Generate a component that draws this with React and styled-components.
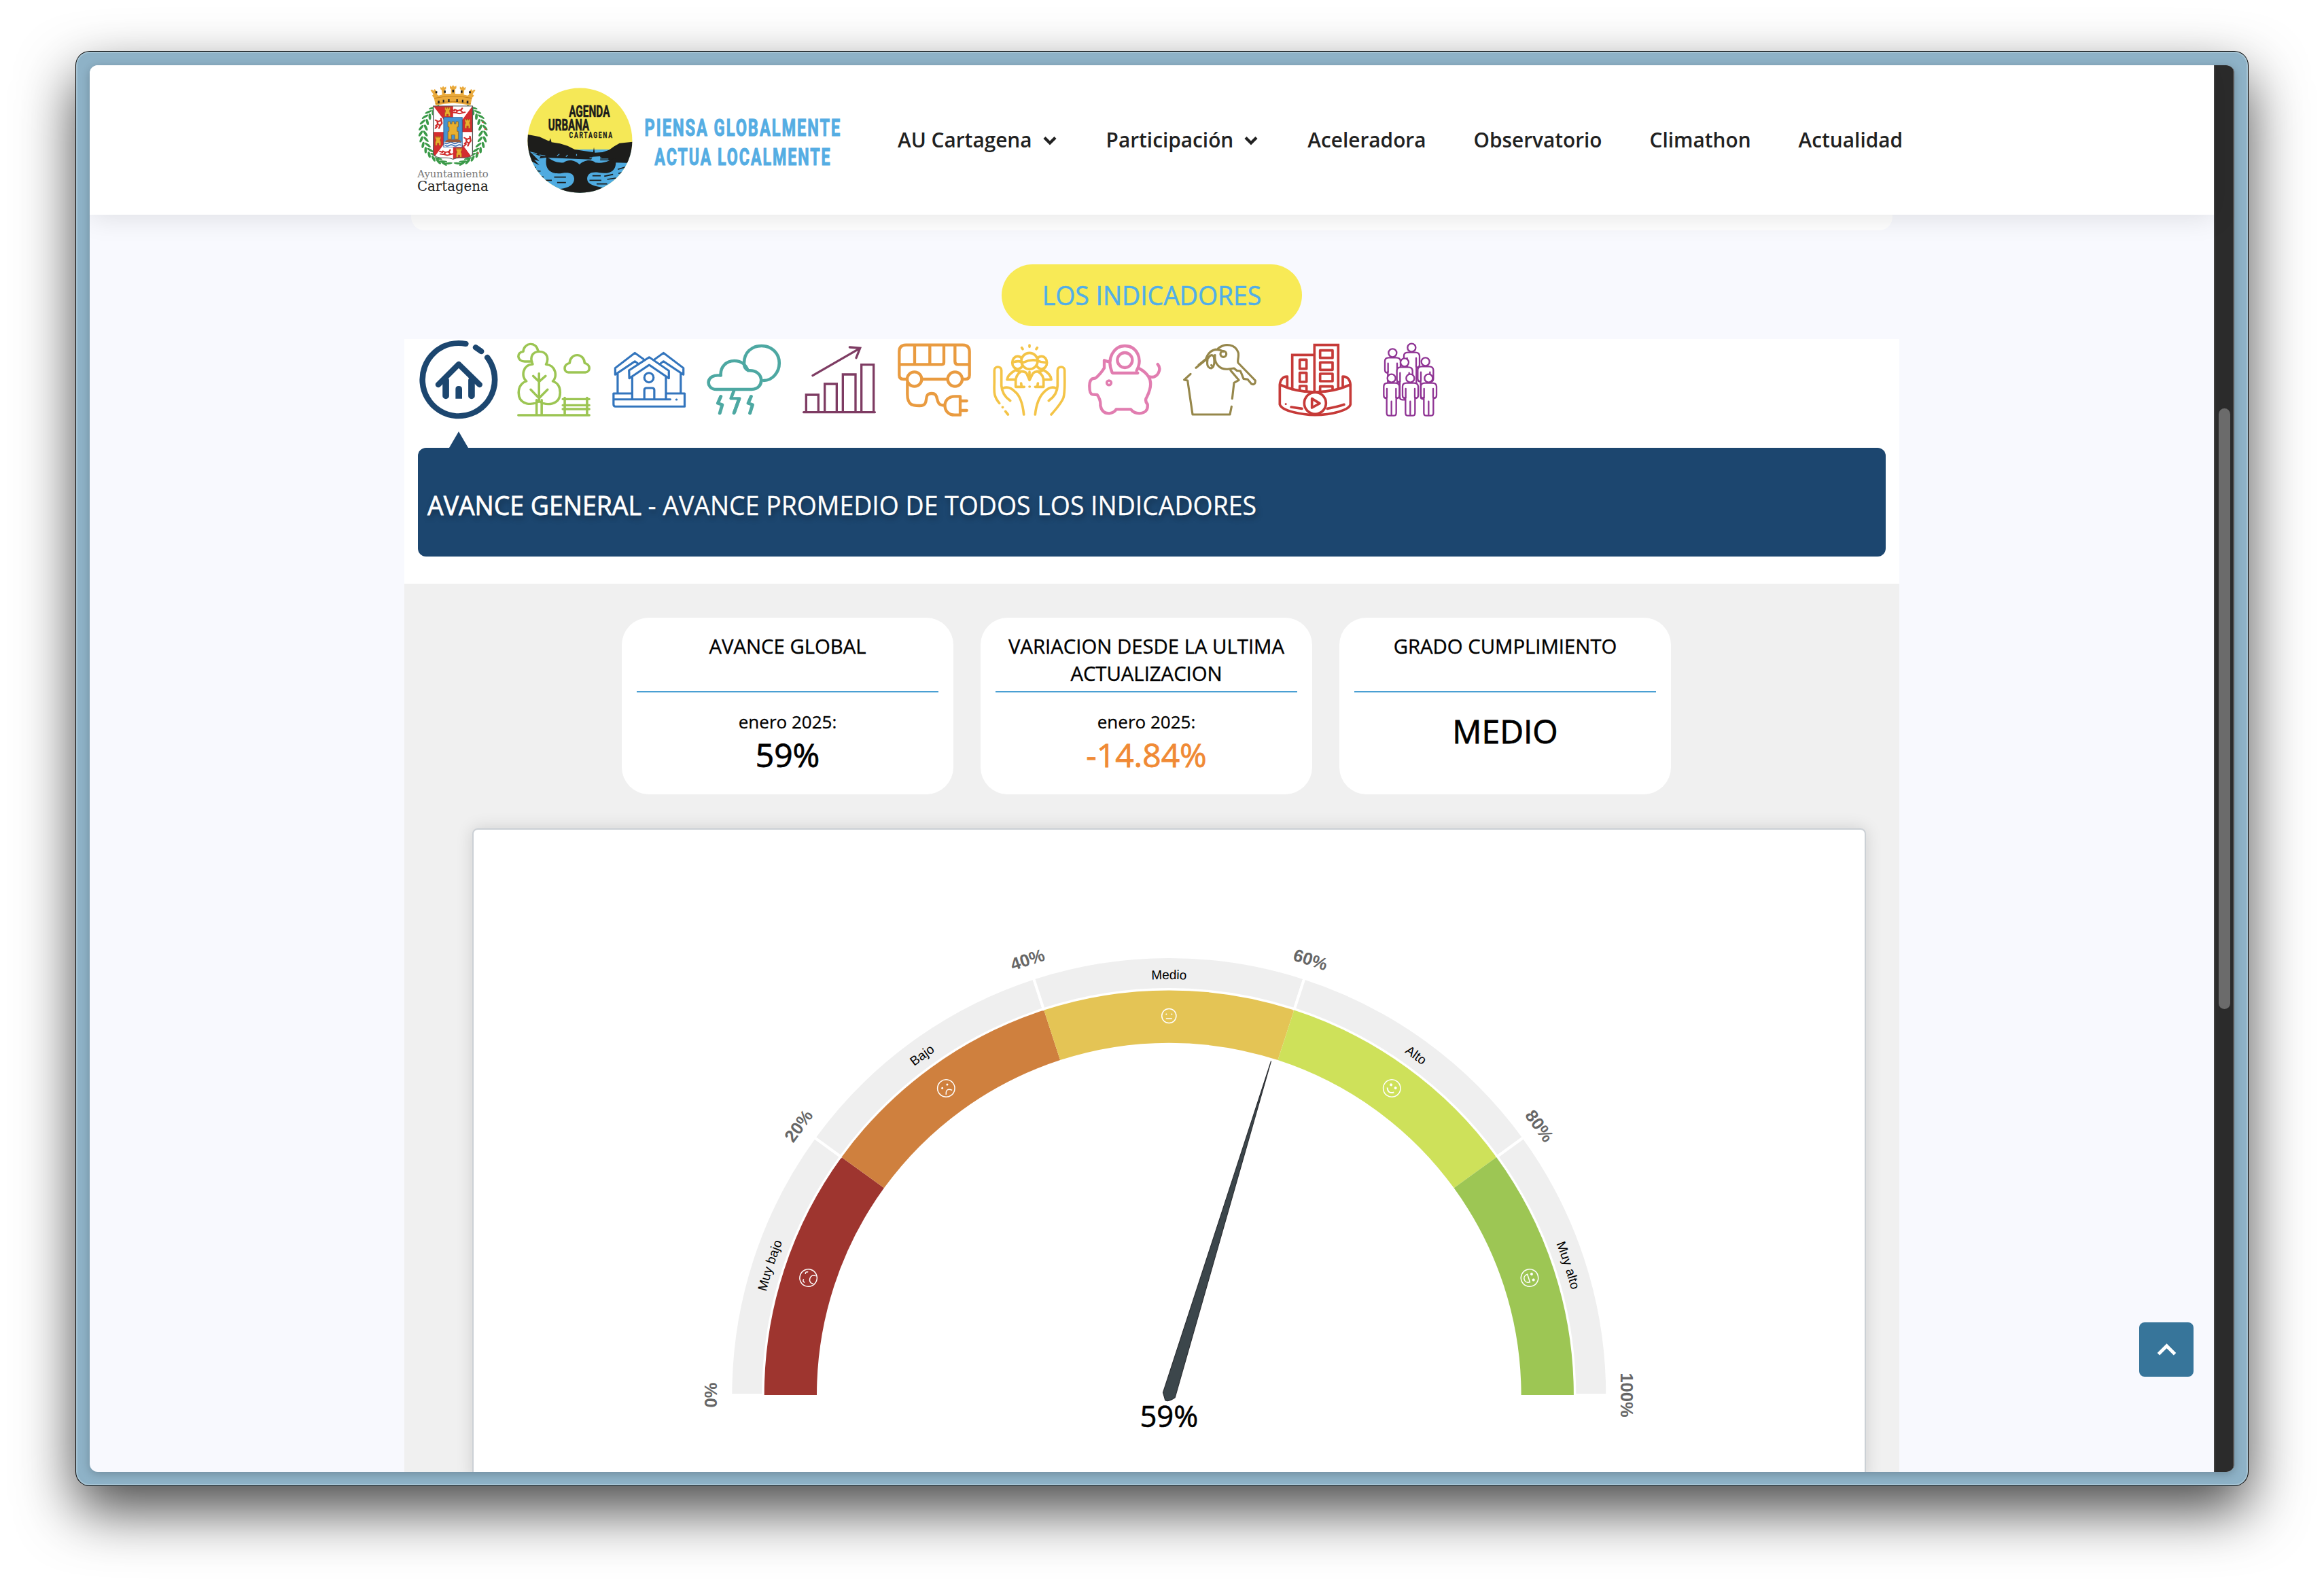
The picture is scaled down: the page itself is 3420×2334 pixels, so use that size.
import React from "react";
import styled, { createGlobalStyle } from "styled-components";

const SANS = '"Open Sans", "Noto Sans", sans-serif';
const HELV = '"Liberation Sans", Arial, sans-serif';

const GlobalStyle = createGlobalStyle`
  * { box-sizing: border-box; }
  body { margin: 0; background: #fff; overflow: hidden; font-family: ${SANS}; color: #000; }
`;

const Desktop = styled.div`
  width: 3420px;
  height: 2334px;
  padding: 76px 112px 148px;
  background: #fff;
  overflow: hidden;
`;

const WindowFrame = styled.div`
  width: 3196px;
  height: 2110px;
  padding: 18px;
  border: 2px solid #a6c4d4;
  border-radius: 20px;
  background: #8eb2c7;
  box-shadow: 0 0 0 1px #000, 0 36px 84px rgba(0, 0, 0, 0.72);
`;

const Viewport = styled.div`
  position: relative;
  display: flex;
  width: 3156px;
  height: 2070px;
  border-radius: 12px;
  background: #f8f9fe;
  overflow: hidden;
`;

const ViewportShadow = styled.div`
  border-radius: 12px;
  box-shadow: 0 3px 14px rgba(0, 0, 0, 0.22);
`;

const Page = styled.div`
  display: flex;
  flex-direction: column;
  width: 3126px;
  height: 2070px;
`;

const ScrollTrack = styled.div`
  width: 30px;
  padding: 505px 4px 0 5px;
  border-left: 2px solid #404040;
  border-right: 2px solid #555;
  background: #2b2b2b;
`;

const ScrollThumb = styled.div`
  width: 17px;
  height: 884px;
  border-radius: 9px;
  background: #6b6b6b;
`;

const Header = styled.header`
  position: relative;
  z-index: 1;
  display: flex;
  flex: none;
  height: 220px;
  padding: 24px 0 0 478px;
  background: #fff;
  box-shadow: 0 4px 38px rgba(0, 0, 0, 0.11);
`;

const Crest = styled.svg`
  flex: none;
  width: 114px;
  height: 170px;
  overflow: visible;
`;

const Brand = styled.svg`
  flex: none;
  width: 468px;
  height: 170px;
  margin-left: 48px;
  overflow: visible;
`;

const Nav = styled.nav`
  display: flex;
  align-items: center;
  gap: 70px;
  height: 172px;
  margin: 0 0 0 81px;
`;

const NavLink = styled.a`
  display: flex;
  align-items: center;
  gap: 16px;
  font-size: 29.8px;
  font-weight: 600;
  line-height: 40px;
  color: #212121;
  white-space: nowrap;
  svg { width: 20px; height: 14px; margin: 1px 3px 0 0; }
`;

const Main = styled.main`
  display: flex;
  flex-direction: column;
  align-items: center;
  flex: 1;
  overflow: hidden;
`;

const PreviousCard = styled.div`
  flex: none;
  width: 2180px;
  height: 23px;
  border-radius: 0 0 20px 20px;
  background: #fff;
`;

const SectionPill = styled.h2`
  display: flex;
  align-items: center;
  justify-content: center;
  flex: none;
  width: 442px;
  height: 91px;
  margin: 50px 0 19px;
  border-radius: 46px;
  background: #f8ea56;
  color: #50aee8;
  font-size: 37.4px;
  font-weight: 400;
  white-space: nowrap;
  -webkit-text-stroke: 0.5px currentColor;
`;

const Tabs = styled.div`
  flex: none;
  width: 2200px;
  height: 360px;
  padding: 0 20px;
  background: #fff;
`;

const TabRow = styled.div`
  display: flex;
  gap: 20px;
  height: 136px;
`;

const TabIcon = styled.svg`
  width: 120px;
  height: 120px;
  fill: none;
  stroke: ${(p) => p.$tone};
  stroke-width: ${(p) => p.$weight || 10};
  stroke-linecap: round;
  stroke-linejoin: round;
`;

const Pointer = styled.div`
  width: 28px;
  height: 24px;
  margin-left: 46px;
  background: #1c466f;
  clip-path: polygon(50% 0, 100% 100%, 0 100%);
`;

const Banner = styled.div`
  display: flex;
  align-items: center;
  height: 160px;
  padding: 10px 14px 0;
  border-radius: 12px;
  background: #1c466f;
  color: #fff;
  font-size: 37.4px;
  line-height: 52px;
  white-space: pre;
  text-shadow: 2px 4px 8px rgba(0, 0, 0, 0.4);
  -webkit-text-stroke: 0.3px currentColor;
`;

const BannerLead = styled.span`
  font-weight: 500;
  -webkit-text-stroke: 0.8px currentColor;
`;

const Panel = styled.section`
  display: flex;
  flex-direction: column;
  flex: none;
  width: 2200px;
  height: 1320px;
  padding-top: 50px;
  background: #f0f0f0;
`;

const Cards = styled.div`
  display: flex;
  gap: 40px;
  padding-left: 320px;
`;

const Card = styled.div`
  display: flex;
  flex-direction: column;
  align-items: center;
  width: 488px;
  height: 260px;
  padding: 22px;
  border-radius: 40px;
  background: #fff;
  text-align: center;
`;

const CardTitle = styled.div`
  width: 444px;
  height: 88px;
  border-bottom: 2px solid #4a9fd3;
  font-size: 29.3px;
  line-height: 40px;
  -webkit-text-stroke: 0.4px currentColor;
`;

const CardDate = styled.div`
  margin-top: 25px;
  font-size: 26px;
  line-height: 36px;
  -webkit-text-stroke: 0.3px currentColor;
`;

const CardValue = styled.div`
  margin-top: ${(p) => (p.$alone ? 24 : -2)}px;
  font-size: 48px;
  font-weight: 500;
  line-height: 66px;
  color: ${(p) => p.$tone || "#000"};
  -webkit-text-stroke: 0.8px currentColor;
`;

const ChartCard = styled.div`
  width: 2051px;
  height: 1100px;
  margin: 50px 0 0 100px;
  border: 2px solid #cbd0d5;
  border-radius: 8px;
  background: #fff;
  box-shadow: 0 0 24px rgba(0, 0, 0, 0.14);
`;

const Gauge = styled.svg`
  display: block;
  width: 2045px;
  height: 940px;
`;

const TopButton = styled.button`
  position: absolute;
  right: 60px;
  bottom: 140px;
  display: flex;
  align-items: center;
  justify-content: center;
  width: 80px;
  height: 80px;
  padding: 0;
  border: 0;
  border-radius: 8px;
  background: #37759a;
  svg { width: 29px; height: 20px; margin-top: 1px; }
`;

const leaf = (cx, cy, a, k) => (
  <ellipse key={k} cx={cx} cy={cy} rx="14" ry="4.5" transform={`rotate(${a} ${cx} ${cy})`} />
);

function Laurel({ side }) {
  const out = [];
  for (let i = 0; i < 13; i++) {
    const deg = 53 - i * 10.8;
    const r = (deg * Math.PI) / 180;
    const x = 177 + side * 102 * Math.cos(r);
    const y = 290 - 138 * Math.sin(r);
    const tangent = (Math.atan2(-138 * Math.cos(r), -102 * side * Math.sin(r)) * 180) / Math.PI;
    out.push(leaf(x - 8, y - 3, tangent + 26, `a${i}`));
    out.push(leaf(x + 8, y - 3, tangent - 26, `b${i}`));
  }
  return <g fill="#3b9a49">{out}</g>;
}

const Castle = ({ x, y, s = 1 }) => (
  <path
    fill="#e9b02f"
    stroke="#8a5a14"
    strokeWidth="1"
    transform={`translate(${x} ${y}) scale(${s})`}
    d="M-9 20 V2 H-7 V-8 H-9 V-20 H-5 V-15 H-2 V-20 H2 V-15 H5 V-20 H9 V-8 H7 V2 H9 V20 H3 V10 H-3 V20Z"
  />
);

const Lion = ({ x, y, r = 0 }) => (
  <path
    fill="none"
    stroke="#cf2b2b"
    strokeWidth="5.5"
    strokeLinecap="round"
    transform={`translate(${x} ${y}) rotate(${r})`}
    d="M-10 -14 L-4 -10 L-2 4 L6 10 L2 22 M-2 4 L-9 12 M-3 -6 L8 -12 M6 10 L12 0 L9 -20 M-4 14 L-10 22"
  />
);

function CityCrest() {
  return (
    <Crest viewBox="46 60 263 510" preserveAspectRatio="none">
      <path
        fill="#eaaa3c"
        d="M118 166 L112 133 L106 122 L110 116 L100 98 L106 95 L110 101 L114 93 L119 99 L123 118 L128 122 L140 118 L138 97 L134 94 L134 83 L139 88 L143 80 L148 87 L153 82 L153 93 L149 97 L151 115 L170 114 L170 94 L166 90 L166 78 L172 83 L177 76 L182 83 L188 78 L188 90 L184 94 L184 114 L202 115 L204 97 L200 93 L200 82 L206 87 L210 80 L215 88 L220 83 L219 95 L215 97 L213 118 L226 122 L231 118 L234 99 L239 93 L243 101 L248 95 L253 98 L243 116 L248 122 L241 133 L236 166 Q177 144 118 166Z"
      />
      <path fill="none" stroke="#b97512" strokeWidth="2" d="M113 134 Q177 116 241 134 M117 158 Q177 138 237 158" />
      <path fill="#222" d="M117 103h6v9h-6zM146 100h6v10h-6zM174 96h6v12h-6zM203 100h6v10h-6zM231 103h6v9h-6zM125 145h6v12h-6zM142 140h5v12h-5zM160 138h5v12h-5zM188 138h5v12h-5zM207 140h5v12h-5zM223 145h6v12h-6z" />
      <Laurel side={-1} />
      <Laurel side={1} />
      <g fill="#d33"><circle cx="278" cy="240" r="3" /><circle cx="286" cy="270" r="3" /><circle cx="262" cy="376" r="3" /></g>
      <clipPath id="shield"><path d="M110 168 H243 V378 Q242 397 205 397 Q188 396 177 403 Q166 396 149 397 Q112 397 110 378Z" /></clipPath>
      <g clipPath="url(#shield)">
        <rect x="105" y="160" width="145" height="250" fill="#fff" />
        <path fill="#d32d2f" d="M110 168 L177 168 V283 Z M243 168 V283 H177Z M110 283 H177 L110 398Z M177 283 L243 398 L177 405Z" />
        <Castle x={158} y={194} />
        <Castle x={226} y={246} />
        <Castle x={126} y={322} />
        <Castle x={197} y={374} />
        <Lion x={196} y={190} r={80} />
        <Lion x={127} y={244} />
        <Lion x={225} y={322} />
        <Lion x={155} y={374} r={80} />
      </g>
      <path fill="none" stroke="#555" strokeWidth="3" d="M110 168 H243 V378 Q242 397 205 397 Q188 396 177 403 Q166 396 149 397 Q112 397 110 378Z" />
      <rect x="145" y="218" width="63" height="132" fill="#4593d3" stroke="#2c5a8a" strokeWidth="2" />
      <path fill="#f4f7fb" d="M147 326h59v23h-59z" />
      <path fill="none" stroke="#2e67b1" strokeWidth="4" d="M148 331 q7 7 14 0 t14 0 t14 0 t14 0 M150 342 q7 6 14 0 t14 0 t14 0 t12 0" />
      <Castle x={177} y={276} s={1.95} />
      <path fill="#9a5a3a" d="M150 328 Q152 316 165 316 H190 Q203 316 205 328Z" />
      <g fontFamily='"DejaVu Serif Condensed", "DejaVu Serif", serif'>
        <text x="56" y="484" fontSize="44" fill="#777" textLength="241" lengthAdjust="spacingAndGlyphs">Ayuntamiento</text>
        <text x="55" y="544" fontSize="63" fill="#222" textLength="242" lengthAdjust="spacingAndGlyphs">Cartagena</text>
      </g>
    </Crest>
  );
}

function AgendaLogo() {
  return (
    <Brand viewBox="419.7 60 1079.2 510" preserveAspectRatio="none">
      <clipPath id="disc"><ellipse cx="607.5" cy="320" rx="177.5" ry="231.5" /></clipPath>
      <g clipPath="url(#disc)">
        <rect x="420" y="80" width="380" height="480" fill="#f5e857" />
        <rect x="420" y="360" width="380" height="200" fill="#4fabe0" />
        <path
          fill="#1d1d1b"
          d="M420 292 L440 296 L470 304 L500 322 L504 322 L507 310 L511 328 L540 334 L566 344 L590 360 L620 366 L652 372 L655 350 L658 374 L684 372 L706 362 L724 346 L742 332 L790 326 V420 L728 418 L724 408 H676 V390 L650 392 L646 404 L490 396 L470 400 L474 390 L450 378 L436 366 L470 412 L452 404 L470 430 L446 414 L420 420Z"
        />
        <path fill="none" stroke="#4fabe0" strokeWidth="3" d="M440 372 l22 6 M470 384 l20 4 M530 388 l8 -8 M560 392 l6 -8 M596 388 v-8 M640 396 h40 M674 402 h30" />
        <path
          fill="#1d1d1b"
          d="M494 394 C510 402 520 420 552 418 C570 400 592 408 606 426 C620 408 644 400 660 418 C694 424 712 404 728 396 C736 452 712 472 672 462 C648 458 634 464 632 488 C632 508 645 515 662 522 L712 536 L700 556 H500 L530 536 C575 530 588 512 588 488 C586 464 570 460 548 464 C508 472 486 448 494 394Z"
        />
        <path fill="none" stroke="#1d1d1b" strokeWidth="5" d="M434 430 l24 10 M440 440 l20 12 M444 452 l30 4 M452 468 l12 10 M462 476 l22 6 M482 496 h30 M520 482 h40 M650 476 h28 M690 478 l30 -8 M640 496 h40 M664 512 h36 M700 492 l30 -6 M736 448 l40 -16 M738 466 l24 -8 M530 506 h30 M700 524 h24" />
      </g>
      <g fontFamily="Roboto, sans-serif" fontWeight="700" fill="#1d1d1b" stroke="#1d1d1b" strokeWidth="2">
        <text x="570" y="215" fontSize="73" textLength="139" lengthAdjust="spacingAndGlyphs">AGENDA</text>
        <text x="500" y="276" fontSize="73" textLength="139" lengthAdjust="spacingAndGlyphs">URBANA</text>
        <text x="571" y="308" fontSize="36" letterSpacing="7" textLength="150" lengthAdjust="spacingAndGlyphs" strokeWidth="1">CARTAGENA</text>
      </g>
      <g fontFamily="Roboto, sans-serif" fontWeight="700" fill="#55ade3" stroke="#55ade3" strokeWidth="3.5">
        <text x="827" y="299" fontSize="106" letterSpacing="9" textLength="668" lengthAdjust="spacingAndGlyphs">PIENSA GLOBALMENTE</text>
        <text x="861" y="430" fontSize="106" letterSpacing="9" textLength="600" lengthAdjust="spacingAndGlyphs">ACTUA LOCALMENTE</text>
      </g>
    </Brand>
  );
}

const Chevron = () => (
  <svg viewBox="0 0 20 14" fill="none" stroke="#212121" strokeWidth="4.4">
    <path d="M2 2.5 L10 10.5 L18 2.5" />
  </svg>
);

const PEOPLE = [
  [1312, 95], [1228, 118], [1281, 160], [1373, 157], [1223, 230], [1306, 230], [1387, 230],
];

const Person = ({ x, y }) => (
  <g transform={`translate(${x} ${y})`} fill="#fff">
    <path d="M-16 21 Q-34 21 -34 36 V75 Q-34 86 -26 88 L-21 84 V153 Q-21 165 -10 165 H10 Q21 165 21 153 V84 L26 88 Q35 86 35 75 V36 Q34 21 16 21Z" />
    <path d="M-20 46 V84 M20 46 V84 M0 102 V160" />
    <circle r="18" />
  </g>
);

const TABS = [
  {
    tone: "#1c466f", box: "70 57 336 360", weight: 24,
    art: (
      <>
        <path d="M356 138 A149 161 0 1 1 267 78 M308 94 L331 111" />
        <path d="M154 258 L238 168 L324 258" />
        <path strokeWidth="27" d="M185 238 V308 M291 238 V308" />
        <path stroke="none" fill="#1c466f" d="M225 320 V278 Q225 264 238 264 Q252 264 252 278 V320Z" />
      </>
    ),
  },
  {
    tone: "#9cc553", box: "462 57 336 360",
    art: (
      <path d="M540 156 H510 C478 156 475 115 504 112 C506 72 558 66 565 108 M569 332 C545 350 485 352 485 293 C485 265 500 248 517 243 C495 225 500 170 543 168 C530 140 540 112 570 112 C600 112 612 140 598 169 C640 172 645 225 626 243 C645 250 656 268 656 293 C656 350 600 352 569 332Z M569 209 V332 M545 220 L569 245 L596 220 M535 280 L569 318 L604 280 M559 326 V390 M580 326 V390 M484 393 H776 M667 322 H776 M667 349 H776 M667 366 H776 M675 316 V390 M767 316 V390 M690 204 H760 C782 202 782 168 757 163 C754 116 698 116 695 163 C668 168 670 204 690 204Z" />
    ),
  },
  {
    tone: "#3375bd", box: "854 57 336 360", weight: 9,
    art: (
      <>
        <path d="M1000 146 L964 118 L883 185 V214 L964 155 L978 166 M1046 146 L1082 118 L1164 185 V214 L1082 155 L1068 166 M893 208 V296 M1153 208 V296 M940 195 L1023 137 L1104 197 V230 L1023 171 L941 230Z M953 224 V323 M1092 224 V323 M948 297 H876 V323 M1097 297 H1169 V355 H884 Q876 355 876 345 V323 H1110 M1003 322 V282 Q1003 273 1012 273 H1035 Q1044 273 1044 282 V322 M1135 324 h1" />
        <ellipse cx="1022" cy="227" rx="19" ry="21" />
      </>
    ),
  },
  {
    tone: "#4da8a2", box: "1246 57 336 360", weight: 13,
    art: (
      <>
        <path d="M1430 195 C1418 190 1414 180 1414 163 C1414 115 1445 87 1486 87 C1530 87 1559 122 1559 163 C1559 205 1530 240 1495 240 M1318 218 C1255 208 1253 279 1300 279 H1445 C1500 279 1500 190 1430 196 C1420 170 1405 153 1374 153 C1340 153 1315 180 1318 218Z M1372 285 L1360 319 L1395 319 L1372 384" />
        <path strokeWidth="14" d="M1318 310 L1306 340 L1324 347 L1314 384 M1443 310 L1431 340 L1449 347 L1438 384 M1393 322 L1374 380" />
      </>
    ),
  },
  {
    tone: "#7e3c63", box: "105 57 360 360",
    art: (
      <path strokeLinejoin="miter" d="M128 380 H442 M139 378 V303 H193 V378 M221 378 V255 H274 V378 M301 378 V213 H357 V378 M383 378 V170 H437 V378 M168 218 L376 98 M331 93 L377 97 L360 140" />
    ),
  },
  {
    tone: "#e99b40", box: "525 57 360 360", weight: 13,
    art: (
      <>
        <path d="M582 234 H568 Q550 234 550 216 V112 Q550 83 580 83 H830 Q860 83 860 112 V216 Q860 234 843 234 H832 M652 234 H763 M556 169 H738 Q747 169 747 160 V90 M618 88 V165 M685 88 V165 M796 90 V155 Q796 169 810 169 H855 M586 250 V300 C586 352 612 351 640 351 C690 351 650 297 693 297 C733 297 700 350 750 350 M819 310 H795 C737 310 737 392 795 392 H819Z M825 330 H848 M825 372 H848" />
        <circle cx="617" cy="234" r="32" />
        <circle cx="796" cy="234" r="32" />
      </>
    ),
  },
  {
    tone: "#f4c447", box: "945 57 360 360", weight: 11,
    art: (
      <>
        <ellipse cx="1073" cy="161" rx="24" ry="28" />
        <ellipse cx="1178" cy="161" rx="24" ry="28" />
        <circle cx="1125" cy="154" r="36" fill="#fff" />
        <path d="M1050 160 Q1075 150 1098 160 Q1130 145 1160 152 Q1180 162 1200 160 M1063 194 Q1028 215 1026 236 H1060 M1188 194 Q1222 215 1221 236 H1190 M1064 194 L1085 202 Q1066 215 1064 240 V268 H1102 M1187 194 L1165 202 Q1186 215 1187 240 V268 H1150 M1086 200 Q1105 198 1112 208 L1125 238 L1140 208 Q1150 198 1166 200 M1125 202 V230 M1088 252 L1090 266 M1162 252 L1160 266 M1125 267 h1 M1125 84 V91 M1091 95 l4 6 M1159 95 l-4 6" />
        <path d="M992 340 C966 310 969 290 970 250 V195 C970 175 1000 175 1001 195 V262 C1003 295 1020 315 1040 329 M1008 274 Q1035 262 1062 290 Q1092 315 1100 390 M1006 358 h1 M1019 376 L1030 390 M1221 390 Q1266 340 1275 315 C1283 290 1280 250 1280 195 C1280 175 1250 175 1249 195 V262 C1248 295 1230 315 1210 329 M1242 274 Q1218 262 1190 290 Q1158 320 1150 390" />
      </>
    ),
  },
  {
    tone: "#e17db0", box: "-135 57 360 360", weight: 13,
    art: (
      <>
        <path d="M-20 159 L-45 151 V185 Q-62 212 -83 229 L-98 232 Q-111 240 -110 266 Q-110 298 -98 301 L-76 303 Q-60 325 -62 350 Q-55 387 -22 385 Q0 382 8 367 H72 Q85 385 110 385 Q150 383 146 345 Q132 328 143 313 Q172 255 150 222 Q135 200 108 186 M-8 207 H103 M-10 205 C-38 140 0 87 46 87 C100 87 126 145 98 196 M150 222 Q180 232 194 207 Q206 185 191 168" />
        <circle cx="46" cy="150" r="33" />
        <circle cx="-24" cy="250" r="10" strokeWidth="11" />
      </>
    ),
  },
  {
    tone: "#96874b", box: "285 57 360 360", weight: 9.5,
    art: (
      <>
        <path d="M360 184 L402 150 Q415 106 450 103 M372 171 L410 140 M458 98 C490 72 535 80 547 118 C550 140 542 150 546 162 L622 240 Q623 262 605 255 L588 235 L570 232 L562 212 L556 198 L540 196 L528 186 L505 189 C465 195 440 165 444 128 M444 103 Q470 104 480 112 M411 148 Q405 184 427 186 Q446 180 439 135 Q428 118 413 142 M428 172 l1 2 M336 211 L308 237 L323 240 L345 390 H510 L517 355 M520 320 L528 250 L549 238 L513 196" />
        <circle cx="481" cy="123" r="13" />
      </>
    ),
  },
  {
    tone: "#c63a38", box: "705 57 360 360", weight: 11,
    art: (
      <>
        <path strokeLinejoin="miter" d="M785 278 V127 H883 V288 M883 127 V83 H988 V276" />
        <path d="M818 148 h30 v40 h-30Z M818 206 h30 v40 h-30Z M818 280 V264 h30 v18 M908 107 h55 v33 h-55Z M908 160 h55 v33 h-55Z M908 210 h55 v33 h-55Z M908 284 V266 h55 v14" />
        <path d="M763 268 V222 Q735 222 730 258 V345 C738 375 830 392 885 392 C960 392 1038 370 1042 345 V258 Q1038 222 1008 222 V268 M730 258 Q800 291 885 291 Q970 291 1042 258 M780 357 L828 364 M940 364 Q990 355 1014 346" />
        <path strokeWidth="8" d="M756 344 h1" />
        <circle cx="886" cy="340" r="48" fill="#fff" />
        <path d="M872 320 L906 341 L872 360Z" />
      </>
    ),
  },
  {
    tone: "#8f3494", box: "1125 57 360 360", weight: 7,
    art: PEOPLE.map(([x, y]) => <Person key={`${x}`} x={x} y={y} />),
  },
];

const CX = 1023.3;
const CY = 832;
const polar = (r, deg) => {
  const a = (deg * Math.PI) / 180;
  return [CX - r * Math.cos(a), CY - r * Math.sin(a)];
};
const ring = (r1, r2, a, b) => {
  const [x1, y1] = polar(r1, a);
  const [x2, y2] = polar(r1, b);
  const [x3, y3] = polar(r2, b);
  const [x4, y4] = polar(r2, a);
  return `M${x1} ${y1} A${r1} ${r1} 0 0 1 ${x2} ${y2} L${x3} ${y3} A${r2} ${r2} 0 0 0 ${x4} ${y4}Z`;
};

const LEVELS = [
  { name: "Muy bajo", color: "#9e352f" },
  { name: "Bajo", color: "#cf803e" },
  { name: "Medio", color: "#e4c455" },
  { name: "Alto", color: "#cee15a" },
  { name: "Muy alto", color: "#9dc654" },
];

const FACES = [
  <g key="0"><circle r="12.7" /><path d="M-8 -3 q0 -4 4 -3 M8 -3 q0 -4 -4 -3 M-6 9.5 C-8 0 8 0 6 9.5" /></g>,
  <g key="1"><circle r="12.7" /><path d="M-5.5 7.5 Q0 -1.5 5.5 7.5" /><path strokeWidth="3" strokeLinecap="round" d="M-4.5 -3.5 h.1 M4.5 -3.5 h.1" /></g>,
  <g key="2"><circle r="10.6" /><path d="M-4.5 4 H4.5" /><path strokeWidth="2" strokeLinecap="round" d="M-4 -2.5 h.1 M4 -2.5 h.1" /></g>,
  <g key="3"><circle r="12.7" /><path strokeWidth="2" d="M-6 3 Q0 10.5 6 3" /><path strokeWidth="4" strokeLinecap="round" d="M-4 -3.5 h.1 M4 -3.5 h.1" /></g>,
  <g key="4"><circle r="12.7" /><path d="M-6 1.5 H6 C6 10.5 -6 10.5 -6 1.5Z" /><path strokeWidth="4" strokeLinecap="round" d="M-4.5 -4.5 h.1 M4.5 -4.5 h.1" /></g>,
];

function GaugeChart() {
  return (
    <Gauge viewBox="0 0 2045 940">
      <path id="label-arc" fill="none" d={`M${CX - 612} ${CY} A612 612 0 0 1 ${CX + 612} ${CY}`} />
      {LEVELS.map((l, i) => (
        <g key={l.name}>
          <path d={ring(645, 597, i * 36, i * 36 + 36)} fill="#efefef" stroke="#fff" strokeWidth="4" />
          <path d={ring(595.6, 518.3, i * 36, i * 36 + 36)} fill={l.color} />
          <text fontFamily={HELV} fontSize="19" textAnchor="middle">
            <textPath href="#label-arc" startOffset={`${10 + i * 20}%`}>{l.name}</textPath>
          </text>
          <g
            fill="none"
            stroke="#fff"
            strokeWidth="1.5"
            transform={`translate(${polar(558, 18 + i * 36).join(" ")}) rotate(${-72 + i * 36})`}
          >
            {FACES[i]}
          </g>
        </g>
      ))}
      {[0, 20, 40, 60, 80, 100].map((v) => (
        <text
          key={v}
          fontFamily={HELV}
          fontWeight="700"
          fontSize="25.5"
          fill="#666"
          textAnchor="middle"
          transform={`translate(${polar(665, v * 1.8).join(" ")}) rotate(${v * 1.8 - 90})`}
        >
          {v}%
        </text>
      ))}
      <path
        transform={`translate(${CX} ${CY}) rotate(17)`}
        fill="#3c464b"
        stroke="#2c2f33"
        strokeWidth="1.2"
        d="M-9.5 -1 L0 -514 L9.5 -1 L9.5 1 Q5 7 0 9 L-3 9 Z"
      />
      <text x={CX} y={CY + 46.5} fontFamily={SANS} fontSize="43.5" stroke="#000" strokeWidth="0.6" textAnchor="middle">59%</text>
    </Gauge>
  );
}

export default function App() {
  return (
    <>
      <GlobalStyle />
      <Desktop>
        <WindowFrame>
          <ViewportShadow>
            <Viewport>
              <Page>
                <Header>
                  <CityCrest />
                  <AgendaLogo />
                  <Nav>
                    <NavLink>AU Cartagena <Chevron /></NavLink>
                    <NavLink>Participación <Chevron /></NavLink>
                    <NavLink>Aceleradora</NavLink>
                    <NavLink>Observatorio</NavLink>
                    <NavLink>Climathon</NavLink>
                    <NavLink>Actualidad</NavLink>
                  </Nav>
                </Header>
                <Main>
                  <PreviousCard />
                  <SectionPill>LOS INDICADORES</SectionPill>
                  <Tabs>
                    <TabRow>
                      {TABS.map((t) => (
                        <TabIcon key={t.tone} $tone={t.tone} $weight={t.weight} viewBox={t.box} preserveAspectRatio="none">
                          {t.art}
                        </TabIcon>
                      ))}
                    </TabRow>
                    <Pointer />
                    <Banner>
                      <BannerLead>AVANCE GENERAL</BannerLead>
                      <span> - AVANCE PROMEDIO DE TODOS LOS INDICADORES</span>
                    </Banner>
                  </Tabs>
                  <Panel>
                    <Cards>
                      <Card>
                        <CardTitle>AVANCE GLOBAL</CardTitle>
                        <CardDate>enero 2025:</CardDate>
                        <CardValue>59%</CardValue>
                      </Card>
                      <Card>
                        <CardTitle>VARIACION DESDE LA ULTIMA ACTUALIZACION</CardTitle>
                        <CardDate>enero 2025:</CardDate>
                        <CardValue $tone="#f08a35">-14.84%</CardValue>
                      </Card>
                      <Card>
                        <CardTitle>GRADO CUMPLIMIENTO</CardTitle>
                        <CardValue $alone>MEDIO</CardValue>
                      </Card>
                    </Cards>
                    <ChartCard>
                      <GaugeChart />
                    </ChartCard>
                  </Panel>
                </Main>
              </Page>
              <ScrollTrack>
                <ScrollThumb />
              </ScrollTrack>
              <TopButton aria-label="Volver arriba">
                <svg viewBox="0 0 30 20" fill="none" stroke="#fff" strokeWidth="5">
                  <path d="M2.5 16 L15 3.5 L27.5 16" />
                </svg>
              </TopButton>
            </Viewport>
          </ViewportShadow>
        </WindowFrame>
      </Desktop>
    </>
  );
}
